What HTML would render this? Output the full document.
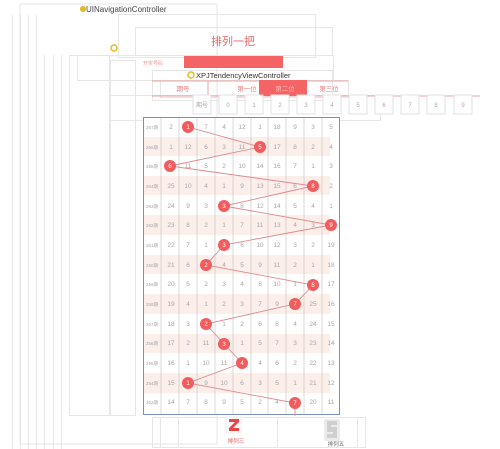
<!DOCTYPE html>
<html><head><meta charset="utf-8"><style>
html,body{margin:0;padding:0;background:#fff;width:500px;height:449px;overflow:hidden}
svg{display:block}
text{font-family:"Liberation Sans","Noto Sans CJK SC",sans-serif}
</style></head><body>
<svg width="500" height="449" viewBox="0 0 500 449" xmlns="http://www.w3.org/2000/svg">
<g stroke="#e6e6e6" stroke-width="1" fill="none">
<rect x="20" y="4" width="197" height="440"/>
<line x1="12.5" y1="15" x2="12.5" y2="449"/><line x1="20.5" y1="15" x2="20.5" y2="449"/>
<line x1="28.5" y1="15" x2="28.5" y2="449"/><line x1="36.5" y1="15" x2="36.5" y2="449"/>
<line x1="44.5" y1="55" x2="44.5" y2="449"/><line x1="53.5" y1="55" x2="53.5" y2="449"/>
<line x1="61.5" y1="55" x2="61.5" y2="449"/>
<rect x="69.5" y="55.5" width="40" height="360"/>
<rect x="110.5" y="60.5" width="25" height="355"/>
<rect x="77.5" y="55.5" width="256" height="25"/>
<rect x="118.5" y="14.5" width="197" height="43"/>
<rect x="135.5" y="27.5" width="197" height="28"/>
<rect x="152.5" y="70.5" width="180" height="30"/>
<rect x="160.5" y="80.5" width="188" height="17"/>
<rect x="152.5" y="417.5" width="213" height="30"/>
<line x1="160.5" y1="417" x2="160.5" y2="447"/><line x1="178.5" y1="417" x2="178.5" y2="447"/>
<line x1="277.5" y1="417" x2="277.5" y2="447"/><line x1="357.5" y1="417" x2="357.5" y2="447"/>
<rect x="110.5" y="95.5" width="270" height="25"/>
</g>
<text x="86" y="12" font-size="8" fill="#444">UINavigationController</text>
<circle cx="83" cy="9" r="3" fill="#e8b820"/>
<circle cx="114" cy="48" r="3" fill="none" stroke="#e8b820" stroke-width="1.5"/>
<text x="233" y="45" font-size="11" fill="#e66" text-anchor="middle">排列一把</text>
<rect x="184" y="56" width="99" height="12" fill="#f46464"/>
<text x="143" y="65" font-size="5" fill="#e99">开奖号码</text>
<circle cx="191" cy="75" r="3" fill="none" stroke="#e8b820" stroke-width="1.5"/>
<text x="196" y="78" font-size="7.5" fill="#333">XPJTendencyViewController</text>
<line x1="152" y1="81" x2="348" y2="81" stroke="#e88" stroke-width="0.8"/>
<line x1="152" y1="96" x2="480" y2="96" stroke="#d88" stroke-width="0.8"/>
<line x1="208" y1="81" x2="208" y2="96" stroke="#e88" stroke-width="0.8"/>
<rect x="259" y="80" width="48" height="16" fill="#f46464"/>
<text x="183" y="91" font-size="6.5" fill="#e77" text-anchor="middle">期号</text>
<text x="247" y="91" font-size="6.5" fill="#e77" text-anchor="middle">第一位</text>
<text x="285" y="91" font-size="6.5" fill="#fbb" text-anchor="middle">第二位</text>
<text x="329" y="91" font-size="6.5" fill="#e77" text-anchor="middle">第三位</text>
<g stroke="#e2e2e2" fill="#fff">
<rect x="193" y="95" width="18" height="19"/><rect x="219" y="95" width="18" height="19"/>
<rect x="245" y="95" width="18" height="19"/><rect x="271" y="95" width="18" height="19"/>
<rect x="297" y="95" width="18" height="19"/><rect x="323" y="95" width="18" height="19"/>
<rect x="349" y="95" width="18" height="19"/><rect x="375" y="95" width="18" height="19"/>
<rect x="401" y="95" width="18" height="19"/><rect x="427" y="95" width="18" height="19"/>
<rect x="454" y="95" width="18" height="19"/>
</g>
<g font-size="6" fill="#aaa" text-anchor="middle">
<text x="202" y="107">期号</text><text x="228" y="107">0</text><text x="254" y="107">1</text>
<text x="280" y="107">2</text><text x="306" y="107">3</text><text x="332" y="107">4</text>
<text x="358" y="107">5</text><text x="384" y="107">6</text><text x="410" y="107">7</text>
<text x="436" y="107">8</text><text x="463" y="107">9</text>
</g>
<rect x="143" y="117" width="197" height="298" fill="#fff"/>
<g fill="#fcefea">
<rect x="143" y="137" width="187" height="19"/><rect x="143" y="176" width="187" height="19"/>
<rect x="143" y="215" width="187" height="20"/><rect x="143" y="255" width="187" height="19"/>
<rect x="143" y="294" width="187" height="20"/><rect x="143" y="334" width="187" height="19"/>
<rect x="143" y="373" width="187" height="20"/>
</g>
<g stroke="#c8c8c8" stroke-width="0.7">
<line x1="161" y1="117" x2="161" y2="415"/><line x1="179" y1="117" x2="179" y2="415"/>
<line x1="197" y1="117" x2="197" y2="415"/><line x1="215" y1="117" x2="215" y2="415"/>
<line x1="233" y1="117" x2="233" y2="415"/><line x1="251" y1="117" x2="251" y2="415"/>
<line x1="268" y1="117" x2="268" y2="415"/><line x1="286" y1="117" x2="286" y2="415"/>
<line x1="304" y1="117" x2="304" y2="415"/><line x1="322" y1="117" x2="322" y2="415"/>
</g>
<rect x="143.5" y="117.5" width="196" height="297" fill="none" stroke="#7a8fc0" stroke-width="1"/>
<g font-size="6.5" fill="#a6a6a6" text-anchor="middle">
<g font-size="4.5"><text x="152" y="129">267期</text><text x="152" y="149">266期</text><text x="152" y="168">265期</text><text x="152" y="188">264期</text><text x="152" y="208">263期</text><text x="152" y="227">262期</text><text x="152" y="247">261期</text><text x="152" y="267">260期</text><text x="152" y="286">259期</text><text x="152" y="306">258期</text><text x="152" y="326">257期</text><text x="152" y="345">256期</text><text x="152" y="365">255期</text><text x="152" y="385">254期</text><text x="152" y="404">253期</text></g>
<text x="171" y="129">2</text><text x="206" y="129">7</text><text x="224" y="129">4</text><text x="242" y="129">12</text><text x="260" y="129">1</text><text x="277" y="129">18</text><text x="295" y="129">9</text><text x="313" y="129">3</text><text x="331" y="129">5</text>
<text x="171" y="149">1</text><text x="188" y="149">12</text><text x="206" y="149">6</text><text x="224" y="149">3</text><text x="242" y="149">11</text><text x="277" y="149">17</text><text x="295" y="149">8</text><text x="313" y="149">2</text><text x="331" y="149">4</text>
<text x="188" y="168">11</text><text x="206" y="168">5</text><text x="224" y="168">2</text><text x="242" y="168">10</text><text x="260" y="168">14</text><text x="277" y="168">16</text><text x="295" y="168">7</text><text x="313" y="168">1</text><text x="331" y="168">3</text>
<text x="171" y="188">25</text><text x="188" y="188">10</text><text x="206" y="188">4</text><text x="224" y="188">1</text><text x="242" y="188">9</text><text x="260" y="188">13</text><text x="277" y="188">15</text><text x="295" y="188">6</text><text x="331" y="188">2</text>
<text x="171" y="208">24</text><text x="188" y="208">9</text><text x="206" y="208">3</text><text x="242" y="208">8</text><text x="260" y="208">12</text><text x="277" y="208">14</text><text x="295" y="208">5</text><text x="313" y="208">4</text><text x="331" y="208">1</text>
<text x="171" y="227">23</text><text x="188" y="227">8</text><text x="206" y="227">2</text><text x="224" y="227">1</text><text x="242" y="227">7</text><text x="260" y="227">11</text><text x="277" y="227">13</text><text x="295" y="227">4</text><text x="313" y="227">3</text>
<text x="171" y="247">22</text><text x="188" y="247">7</text><text x="206" y="247">1</text><text x="242" y="247">6</text><text x="260" y="247">10</text><text x="277" y="247">12</text><text x="295" y="247">3</text><text x="313" y="247">2</text><text x="331" y="247">19</text>
<text x="171" y="267">21</text><text x="188" y="267">6</text><text x="224" y="267">4</text><text x="242" y="267">5</text><text x="260" y="267">9</text><text x="277" y="267">11</text><text x="295" y="267">2</text><text x="313" y="267">1</text><text x="331" y="267">18</text>
<text x="171" y="286">20</text><text x="188" y="286">5</text><text x="206" y="286">2</text><text x="224" y="286">3</text><text x="242" y="286">4</text><text x="260" y="286">8</text><text x="277" y="286">10</text><text x="295" y="286">1</text><text x="331" y="286">17</text>
<text x="171" y="306">19</text><text x="188" y="306">4</text><text x="206" y="306">1</text><text x="224" y="306">2</text><text x="242" y="306">3</text><text x="260" y="306">7</text><text x="277" y="306">9</text><text x="313" y="306">25</text><text x="331" y="306">16</text>
<text x="171" y="326">18</text><text x="188" y="326">3</text><text x="224" y="326">1</text><text x="242" y="326">2</text><text x="260" y="326">6</text><text x="277" y="326">8</text><text x="295" y="326">4</text><text x="313" y="326">24</text><text x="331" y="326">15</text>
<text x="171" y="345">17</text><text x="188" y="345">2</text><text x="206" y="345">11</text><text x="242" y="345">1</text><text x="260" y="345">5</text><text x="277" y="345">7</text><text x="295" y="345">3</text><text x="313" y="345">23</text><text x="331" y="345">14</text>
<text x="171" y="365">16</text><text x="188" y="365">1</text><text x="206" y="365">10</text><text x="224" y="365">11</text><text x="260" y="365">4</text><text x="277" y="365">6</text><text x="295" y="365">2</text><text x="313" y="365">22</text><text x="331" y="365">13</text>
<text x="171" y="385">15</text><text x="206" y="385">9</text><text x="224" y="385">10</text><text x="242" y="385">6</text><text x="260" y="385">3</text><text x="277" y="385">5</text><text x="295" y="385">1</text><text x="313" y="385">21</text><text x="331" y="385">12</text>
<text x="171" y="404">14</text><text x="188" y="404">7</text><text x="206" y="404">8</text><text x="224" y="404">9</text><text x="242" y="404">5</text><text x="260" y="404">2</text><text x="277" y="404">4</text><text x="313" y="404">20</text><text x="331" y="404">11</text>
</g>
<polyline fill="none" stroke="#e08a8e" stroke-width="0.9" points="188,127 260,147 170,166 313,186 224,206 331,225 224,245 206,265 313,285 295,304 206,324 224,344 242,363 188,383 295,403 295,416"/>
<g fill="#f25c5c">
<circle cx="188" cy="127" r="6"/><circle cx="260" cy="147" r="6"/><circle cx="170" cy="166" r="6"/>
<circle cx="313" cy="186" r="6"/><circle cx="224" cy="206" r="6"/><circle cx="331" cy="225" r="6"/>
<circle cx="224" cy="245" r="6"/><circle cx="206" cy="265" r="6"/><circle cx="313" cy="285" r="6"/>
<circle cx="295" cy="304" r="6"/><circle cx="206" cy="324" r="6"/><circle cx="224" cy="344" r="6"/>
<circle cx="242" cy="363" r="6"/><circle cx="188" cy="383" r="6"/><circle cx="295" cy="403" r="6"/>
</g>
<g font-size="6" fill="#fff" text-anchor="middle">
<text x="188" y="129">1</text><text x="260" y="149">5</text><text x="170" y="168">6</text><text x="313" y="188">8</text><text x="224" y="208">3</text><text x="331" y="227">9</text><text x="224" y="247">3</text><text x="206" y="267">2</text><text x="313" y="287">8</text><text x="295" y="306">7</text><text x="206" y="326">2</text><text x="224" y="346">3</text><text x="242" y="365">4</text><text x="188" y="385">1</text><text x="295" y="405">7</text>
</g>
<rect x="226" y="417" width="15" height="16" fill="#fff" stroke="#e4e4e4" stroke-width="0.6"/>
<path d="M229 419h10v3l-6 6h6v3h-10v-3l6-6h-6z" fill="#ee4444"/>
<text x="236" y="443" font-size="5.5" fill="#e55" text-anchor="middle">排列三</text>
<rect x="324" y="419" width="16" height="22" rx="2" fill="#ebebeb"/>
<path d="M327 421h10v4h-6v2h6v11h-10v-4h6v-2h-6z" fill="#cfcfcf"/>
<text x="336" y="446" font-size="5.5" fill="#666" text-anchor="middle">排列五</text>
</svg>
</body></html>
